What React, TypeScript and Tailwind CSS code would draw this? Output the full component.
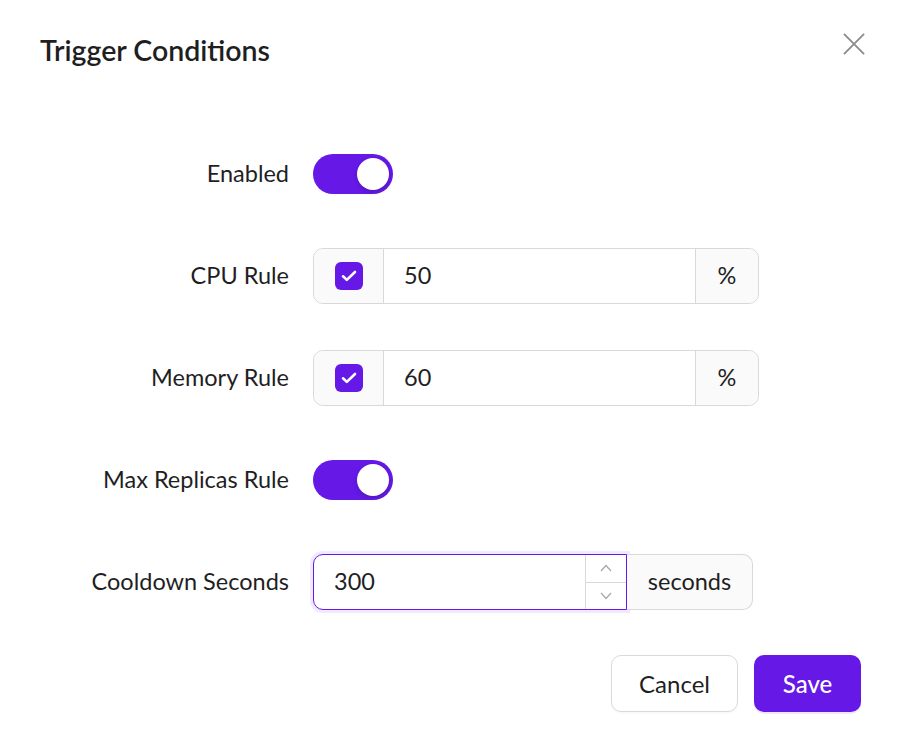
import { useState } from 'react';

const font = { fontFamily: '"Source Sans Pro", Lato, "Noto Sans", sans-serif' };

const Switch = ({ on, onToggle }: { on: boolean; onToggle: () => void }) => (
  <button
    type="button"
    onClick={onToggle}
    className={`relative flex h-10 w-20 items-center rounded-full px-1 ${on ? 'justify-end bg-[#6518e6]' : 'justify-start bg-[#bfbfbf]'}`}
  >
    <span className="h-8 w-8 rounded-full bg-white shadow-[0_2px_4px_rgba(0,35,11,0.2)]" />
  </button>
);

const Check = () => (
  <span className="flex h-7 w-7 items-center justify-center rounded-[6px] bg-[#6518e6]">
    <svg width="18" height="18" viewBox="0 0 18 18" fill="none">
      <path d="M3 9.3l3.8 3.6L15 5" stroke="white" strokeWidth="2.6" strokeLinecap="round" strokeLinejoin="round" />
    </svg>
  </span>
);

const RuleInput = ({ value }: { value: string }) => (
  <div className="flex h-14 w-[446px] rounded-[10px] border border-[#d9d9d9] text-[23.5px] text-[#1f1f1f]">
    <div className="flex w-[70px] items-center justify-center rounded-l-[10px] border-r border-[#d9d9d9] bg-[#fafafa]">
      <Check />
    </div>
    <div className="flex flex-1 items-center pl-5">{value}</div>
    <div className="flex w-[63px] items-center justify-center rounded-r-[10px] border-l border-[#d9d9d9] bg-[#fafafa]">%</div>
  </div>
);

const Row = ({ label, children }: { label: string; children: React.ReactNode }) => (
  <div className="flex h-14 items-center">
    <div className="w-[249px] text-right text-[23.5px] text-[#1f1f1f]">{label}</div>
    <div className="ml-6 flex items-center">{children}</div>
  </div>
);

export default function App() {
  const [enabled, setEnabled] = useState(true);
  const [maxRule, setMaxRule] = useState(true);

  return (
    <div className="relative h-[746px] w-[898px] bg-white" style={font}>
      <div className="flex items-start justify-between pl-10 pr-[33px] pt-[33px]">
        <h1 className="text-[28.5px] font-semibold leading-[34px] text-[#1f1f1f]">Trigger Conditions</h1>
        <button type="button" className="flex h-[22px] w-[22px] items-center justify-center">
          <svg width="24" height="24" viewBox="0 0 24 24" fill="none">
            <path d="M1 1l22 22M23 1L1 23" stroke="#8c8c8c" strokeWidth="2" />
          </svg>
        </button>
      </div>

      <div className="mt-[79px] flex flex-col gap-[46px] pl-10">
        <Row label="Enabled">
          <Switch on={enabled} onToggle={() => setEnabled(!enabled)} />
        </Row>
        <Row label="CPU Rule">
          <RuleInput value="50" />
        </Row>
        <Row label="Memory Rule">
          <RuleInput value="60" />
        </Row>
        <Row label="Max Replicas Rule">
          <Switch on={maxRule} onToggle={() => setMaxRule(!maxRule)} />
        </Row>
        <Row label="Cooldown Seconds">
          <div className="flex h-14 text-[23.5px] text-[#1f1f1f]">
            <div className="flex w-[314px] rounded-l-[10px] border border-[#6518e6] shadow-[0_0_0_3px_rgba(120,40,240,0.1)]">
              <div className="flex flex-1 items-center pl-5">300</div>
              <div className="flex w-[41px] flex-col border-l border-[#d9d9d9]">
                <div className="flex flex-1 items-center justify-center border-b border-[#d9d9d9]">
                  <svg width="12" height="8" viewBox="0 0 12 8" fill="none">
                    <path d="M1 7l5-5.5L11 7" stroke="#a6a6a6" strokeWidth="1.2" />
                  </svg>
                </div>
                <div className="flex flex-1 items-center justify-center">
                  <svg width="12" height="8" viewBox="0 0 12 8" fill="none">
                    <path d="M1 1l5 5.5L11 1" stroke="#a6a6a6" strokeWidth="1.2" />
                  </svg>
                </div>
              </div>
            </div>
            <div className="flex w-[126px] items-center justify-center rounded-r-[10px] border border-l-0 border-[#d9d9d9] bg-[#fafafa]">
              seconds
            </div>
          </div>
        </Row>
      </div>

      <div className="mt-[45px] flex justify-end gap-4 pr-[37px]">
        <button
          type="button"
          className="h-[57px] w-[127px] rounded-[10px] border border-[#d9d9d9] bg-white text-[24px] text-[#1f1f1f] shadow-[0_2px_0_rgba(0,0,0,0.02)]"
        >
          Cancel
        </button>
        <button
          type="button"
          className="h-[57px] w-[107px] rounded-[10px] bg-[#6518e6] text-[24px] font-medium text-white shadow-[0_2px_0_rgba(100,24,230,0.1)]"
        >
          Save
        </button>
      </div>
    </div>
  );
}
